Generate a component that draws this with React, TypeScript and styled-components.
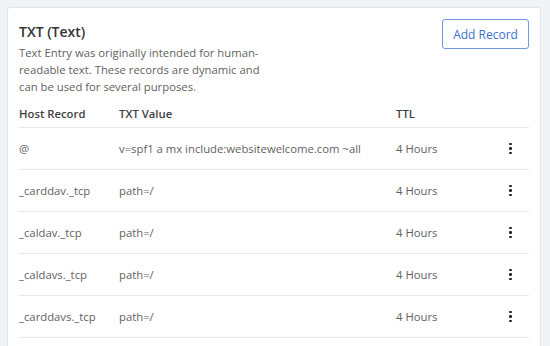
import styled, { createGlobalStyle } from 'styled-components';

const GlobalStyle = createGlobalStyle`
  html, body {
    margin: 0;
    padding: 0;
    background: #f1f4f7;
    font-family: "Open Sans", "Liberation Sans", sans-serif;
  }
`;

const Page = styled.div`
  padding: 7px 9px 0 7px;
  height: 346px;
  box-sizing: border-box;
  overflow: hidden;
`;

const Card = styled.div`
  background: #fff;
  border: 1px solid #e1e5ea;
  border-radius: 3px;
  padding: 11px 11px 20px 11px;
`;

const Header = styled.div`
  display: flex;
  justify-content: space-between;
  align-items: flex-start;
`;

const Title = styled.h2`
  margin: 3px 0 0;
  font-size: 14px;
  font-weight: 600;
  color: #333;
  line-height: 20px;
`;

const Description = styled.p`
  margin: 2px 0 0;
  max-width: 262px;
  font-size: 11.3px;
  line-height: 17px;
  color: #5f5f5f;
`;

const AddButton = styled.button`
  font-family: inherit;
  font-size: 12px;
  font-weight: 500;
  color: #3b6fd0;
  background: #fff;
  border: 1px solid #6e98e0;
  border-radius: 3px;
  width: 87px;
  height: 30px;
  padding: 0;
  cursor: pointer;
`;

const Table = styled.div`
  margin-top: 4px;
`;

const Row = styled.div<{ $head?: boolean }>`
  display: grid;
  grid-template-columns: 100px 277px 1fr 24px;
  align-items: center;
  height: ${({ $head }) => ($head ? '28px' : '41px')};
  border-bottom: 1px solid #e4e7eb;
  font-size: 11.3px;
  color: ${({ $head }) => ($head ? '#3f3f3f' : '#5f5f5f')};
  font-weight: ${({ $head }) => ($head ? 600 : 400)};
`;

const Cell = styled.div`
  white-space: nowrap;
`;

const Kebab = styled.div`
  justify-self: start;
  margin-left: 4px;
  display: flex;
  flex-direction: column;
  align-items: center;
  gap: 2px;
  width: 3px;

  span {
    width: 2.5px;
    height: 2.5px;
    background: #222;
    border-radius: 50%;
  }
`;

const records = [
  { host: '@', value: 'v=spf1 a mx include:websitewelcome.com ~all', ttl: '4 Hours' },
  { host: '_carddav._tcp', value: 'path=/', ttl: '4 Hours' },
  { host: '_caldav._tcp', value: 'path=/', ttl: '4 Hours' },
  { host: '_caldavs._tcp', value: 'path=/', ttl: '4 Hours' },
  { host: '_carddavs._tcp', value: 'path=/', ttl: '4 Hours' }
];

export default function App() {
  return (
    <Page>
      <GlobalStyle />
      <Card>
        <Header>
          <div>
            <Title>TXT (Text)</Title>
            <Description>
              Text Entry was originally intended for human-readable text. These
              records are dynamic and can be used for several purposes.
            </Description>
          </div>
          <AddButton>Add Record</AddButton>
        </Header>

        <Table>
          <Row $head>
            <Cell>Host Record</Cell>
            <Cell>TXT Value</Cell>
            <Cell>TTL</Cell>
            <Cell />
          </Row>
          {records.map((r) => (
            <Row key={r.host}>
              <Cell>{r.host}</Cell>
              <Cell>{r.value}</Cell>
              <Cell>{r.ttl}</Cell>
              <Kebab>
                <span />
                <span />
                <span />
              </Kebab>
            </Row>
          ))}
        </Table>
      </Card>
    </Page>
  );
}
